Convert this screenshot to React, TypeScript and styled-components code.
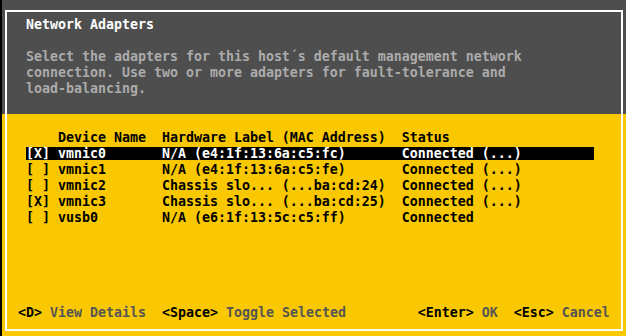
import React from "react";
import styled, { createGlobalStyle } from "styled-components";

const GlobalStyle = createGlobalStyle`
  html, body { margin: 0; padding: 0; background: #000; }
  body { font-family: "DejaVu Sans Mono", "Liberation Mono", monospace; font-size: 13.29px; }
  * { box-sizing: border-box; }
`;

const GRAY = "#4e4e4e";
const YELLOW = "#f9c800";

const Screen = styled.div`
  width: 626px;
  height: 336px;
  padding-left: 2px;
  background: #000;
  display: flex;
  flex-direction: column;
  overflow: hidden;
`;

const TopSection = styled.section`
  height: 114px;
  background: ${GRAY};
  padding: 10px 3px 0 3px;
  display: flex;
`;

const TopFrame = styled.div`
  flex: 1;
  border: 2px solid #fff;
  border-bottom: none;
  padding: 5px 0 0 19px;
`;

const Title = styled.h1`
  margin: 0;
  font: inherit;
  font-weight: bold;
  color: #fff;
  line-height: 16px;
  height: 16px;
  white-space: pre;
`;

const Description = styled.p`
  margin: 16px 0 0;
  color: #ababab;
  font-weight: bold;
  line-height: 16px;
  white-space: pre;
`;

const BottomSection = styled.section`
  flex: 1;
  background: ${YELLOW};
  padding: 0 3px 5px 3px;
  display: flex;
`;

const BottomFrame = styled.div`
  flex: 1;
  border: 2px solid #fff;
  border-top: none;
  padding: 15px 0 8px 19px;
  display: flex;
  flex-direction: column;
`;

const Row = styled.div`
  height: 16px;
  display: flex;
  align-items: center;
`;

const Line = styled.span<{ $selected?: boolean }>`
  width: 568px;
  height: 13px;
  line-height: 13px;
  white-space: pre;
  font-weight: bold;
  color: ${(p) => (p.$selected ? "#fff" : "#000")};
  background: ${(p) => (p.$selected ? "#000" : "transparent")};
`;

const Footer = styled.div`
  margin-top: auto;
  margin-left: -8px;
  height: 16px;
  line-height: 16px;
  white-space: pre;
  font-weight: bold;
`;

const Key = styled.span`
  color: #000;
`;

const Action = styled.span`
  color: #555;
`;

const pad = (s: string, n: number) => s + " ".repeat(Math.max(0, n - s.length));

const adapters = [
  { sel: true, name: "vmnic0", label: "N/A (e4:1f:13:6a:c5:fc)", status: "Connected (...)" },
  { sel: false, name: "vmnic1", label: "N/A (e4:1f:13:6a:c5:fe)", status: "Connected (...)" },
  { sel: false, name: "vmnic2", label: "Chassis slo... (...ba:cd:24)", status: "Connected (...)" },
  { sel: true, name: "vmnic3", label: "Chassis slo... (...ba:cd:25)", status: "Connected (...)" },
  { sel: false, name: "vusb0", label: "N/A (e6:1f:13:5c:c5:ff)", status: "Connected" },
];

export default function App() {
  return (
    <>
      <GlobalStyle />
      <Screen>
        <TopSection>
          <TopFrame>
            <Title>Network Adapters</Title>
            <Description>
              {"Select the adapters for this host\u00b4s default management network\nconnection. Use two or more adapters for fault-tolerance and\nload-balancing."}
            </Description>
          </TopFrame>
        </TopSection>
        <BottomSection>
          <BottomFrame>
            <Row>
              <Line>{"    " + pad("Device Name", 13) + pad("Hardware Label (MAC Address)", 30) + "Status"}</Line>
            </Row>
            {adapters.map((a, i) => (
              <Row key={a.name}>
                <Line $selected={i === 0}>
                  {(a.sel ? "[X] " : "[ ] ") + pad(a.name, 13) + pad(a.label, 30) + a.status}
                </Line>
              </Row>
            ))}
            <Footer>
              <Key>{"<D>"}</Key>
              <Action>{" View Details  "}</Action>
              <Key>{"<Space>"}</Key>
              <Action>{" Toggle Selected         "}</Action>
              <Key>{"<Enter>"}</Key>
              <Action>{" OK  "}</Action>
              <Key>{"<Esc>"}</Key>
              <Action>{" Cancel"}</Action>
            </Footer>
          </BottomFrame>
        </BottomSection>
      </Screen>
    </>
  );
}
